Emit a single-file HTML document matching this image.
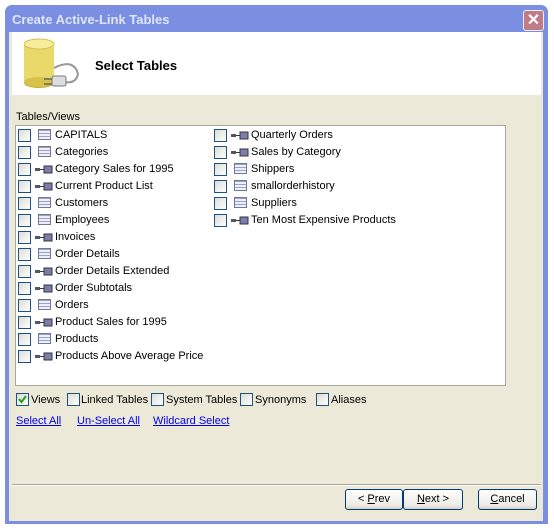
<!DOCTYPE html>
<html><head><style>
body{margin:0;width:554px;height:531px;background:#fff;position:relative;overflow:hidden;font-family:"Liberation Sans",sans-serif;font-size:11px;color:#000}
.win{position:absolute;left:5px;top:5px;width:543px;height:519px;background:#7a8ee2;border-radius:7px 7px 0 0}
.title{position:absolute;left:12px;top:12px;color:#dfe6fb;font-size:13px;font-weight:bold}
.close{position:absolute;left:523px;top:10px;width:19px;height:19px;background:#c07c86;border:1px solid #eee;border-radius:3px;color:#fff;font:bold 16px/19px "Liberation Sans",sans-serif;text-align:center}
.client{position:absolute;left:9px;top:32px;width:534px;height:489px;background:#ece9d8}
.hdr{position:absolute;left:12px;top:32px;width:529px;height:63px;background:#fff}
.abs{position:absolute;white-space:nowrap}
.list{position:absolute;left:15px;top:125px;width:489px;height:259px;background:#fff;border:1px solid #a9a797}
.cb{position:absolute;width:11px;height:11px;border:1px solid #1c5180;background:linear-gradient(135deg,#dcdcd6,#fff)}
.ti{position:absolute;width:11px;height:9px;border:1px solid #6e7a94;background:repeating-linear-gradient(#9aa4bd 0 1px,#eef 1px 3px)}
.lnk{position:absolute;color:#0000ee;text-decoration:underline}
.btn{position:absolute;top:489px;height:19px;border:1px solid #003c74;border-radius:3px;background:linear-gradient(#fff,#ecebe6 80%,#d6d0c5);text-align:center;line-height:19px}
</style></head><body>
<div class="win"></div>
<div class="title">Create Active-Link Tables</div>
<div class="close">✕</div>
<div class="client"></div>
<div class="hdr"></div>
<svg class="abs" style="left:24px;top:38px" width="60" height="52">
<ellipse cx="15" cy="45" rx="15" ry="5" fill="#c9b02c"/>
<rect x="0" y="6" width="30" height="38" fill="#e9d86a"/>
<ellipse cx="15" cy="44" rx="15" ry="5" fill="#d8c24a"/>
<ellipse cx="15" cy="6" rx="15" ry="5" fill="#f7ec9c" stroke="#d4c14e"/>
<path d="M30 30 Q50 20 54 36 Q52 46 40 44" fill="none" stroke="#999" stroke-width="2"/>
<rect x="28" y="38" width="14" height="10" rx="2" fill="#ddd" stroke="#777"/>
<path d="M20 41h8M20 46h8" stroke="#666" stroke-width="1.5"/>
</svg>
<div class="abs" style="left:95px;top:58px;font-weight:bold;font-size:13px">Select Tables</div>
<div class="abs" style="left:16px;top:111px">Tables/Views</div>
<div class="list"></div>
<div id="rows"></div>
<div class="cb" style="left:16px;top:393px"><svg width="11" height="11" style="position:absolute;left:0;top:0"><path d="M2 5l2.5 3L9 2" stroke="#21a121" stroke-width="2" fill="none"/></svg></div>
<div class="abs" style="left:31px;top:394px">Views</div>
<div class="cb" style="left:67px;top:393px"></div><div class="abs" style="left:81px;top:394px">Linked Tables</div>
<div class="cb" style="left:151px;top:393px"></div><div class="abs" style="left:166px;top:394px">System Tables</div>
<div class="cb" style="left:240px;top:393px"></div><div class="abs" style="left:255px;top:394px">Synonyms</div>
<div class="cb" style="left:316px;top:393px"></div><div class="abs" style="left:331px;top:394px">Aliases</div>
<div class="lnk" style="left:16px;top:415px">Select All</div>
<div class="lnk" style="left:77px;top:415px">Un-Select All</div>
<div class="lnk" style="left:153px;top:415px">Wildcard Select</div>
<div class="abs" style="left:12px;top:484px;width:529px;height:1px;background:#aca899;border-bottom:1px solid #fff"></div>
<div class="btn" style="left:345px;width:56px">&lt; <u>P</u>rev</div>
<div class="btn" style="left:403px;width:58px"><u>N</u>ext &gt;</div>
<div class="btn" style="left:478px;width:57px"><u>C</u>ancel</div>
<script>
var L=[["CAPITALS",0],["Categories",0],["Category Sales for 1995",1],["Current Product List",1],["Customers",0],["Employees",0],["Invoices",1],["Order Details",0],["Order Details Extended",1],["Order Subtotals",1],["Orders",0],["Product Sales for 1995",1],["Products",0],["Products Above Average Price",1]];
var R=[["Quarterly Orders",1],["Sales by Category",1],["Shippers",0],["smallorderhistory",0],["Suppliers",0],["Ten Most Expensive Products",1]];
var h="";
function add(a,x){a.forEach(function(e,i){var y=129+i*17;
h+='<div class="cb" style="left:'+(x)+'px;top:'+y+'px"></div>';
if(e[1])h+='<svg class="abs" style="left:'+(x+17)+'px;top:'+(y+2)+'px" width="18" height="9"><rect x="0" y="3" width="5" height="3" fill="#556"/><path d="M5 4.5h4" stroke="#333"/><rect x="9" y="1" width="8" height="7" fill="#7a7ea8" stroke="#334"/></svg>';
else h+='<div class="ti" style="left:'+(x+20)+'px;top:'+(y)+'px"></div>';
h+='<div class="abs" style="left:'+(x+37)+'px;top:'+(y)+'px">'+e[0]+'</div>';});}
add(L,18);add(R,214);
document.getElementById("rows").innerHTML=h;
</script>
</body></html>
